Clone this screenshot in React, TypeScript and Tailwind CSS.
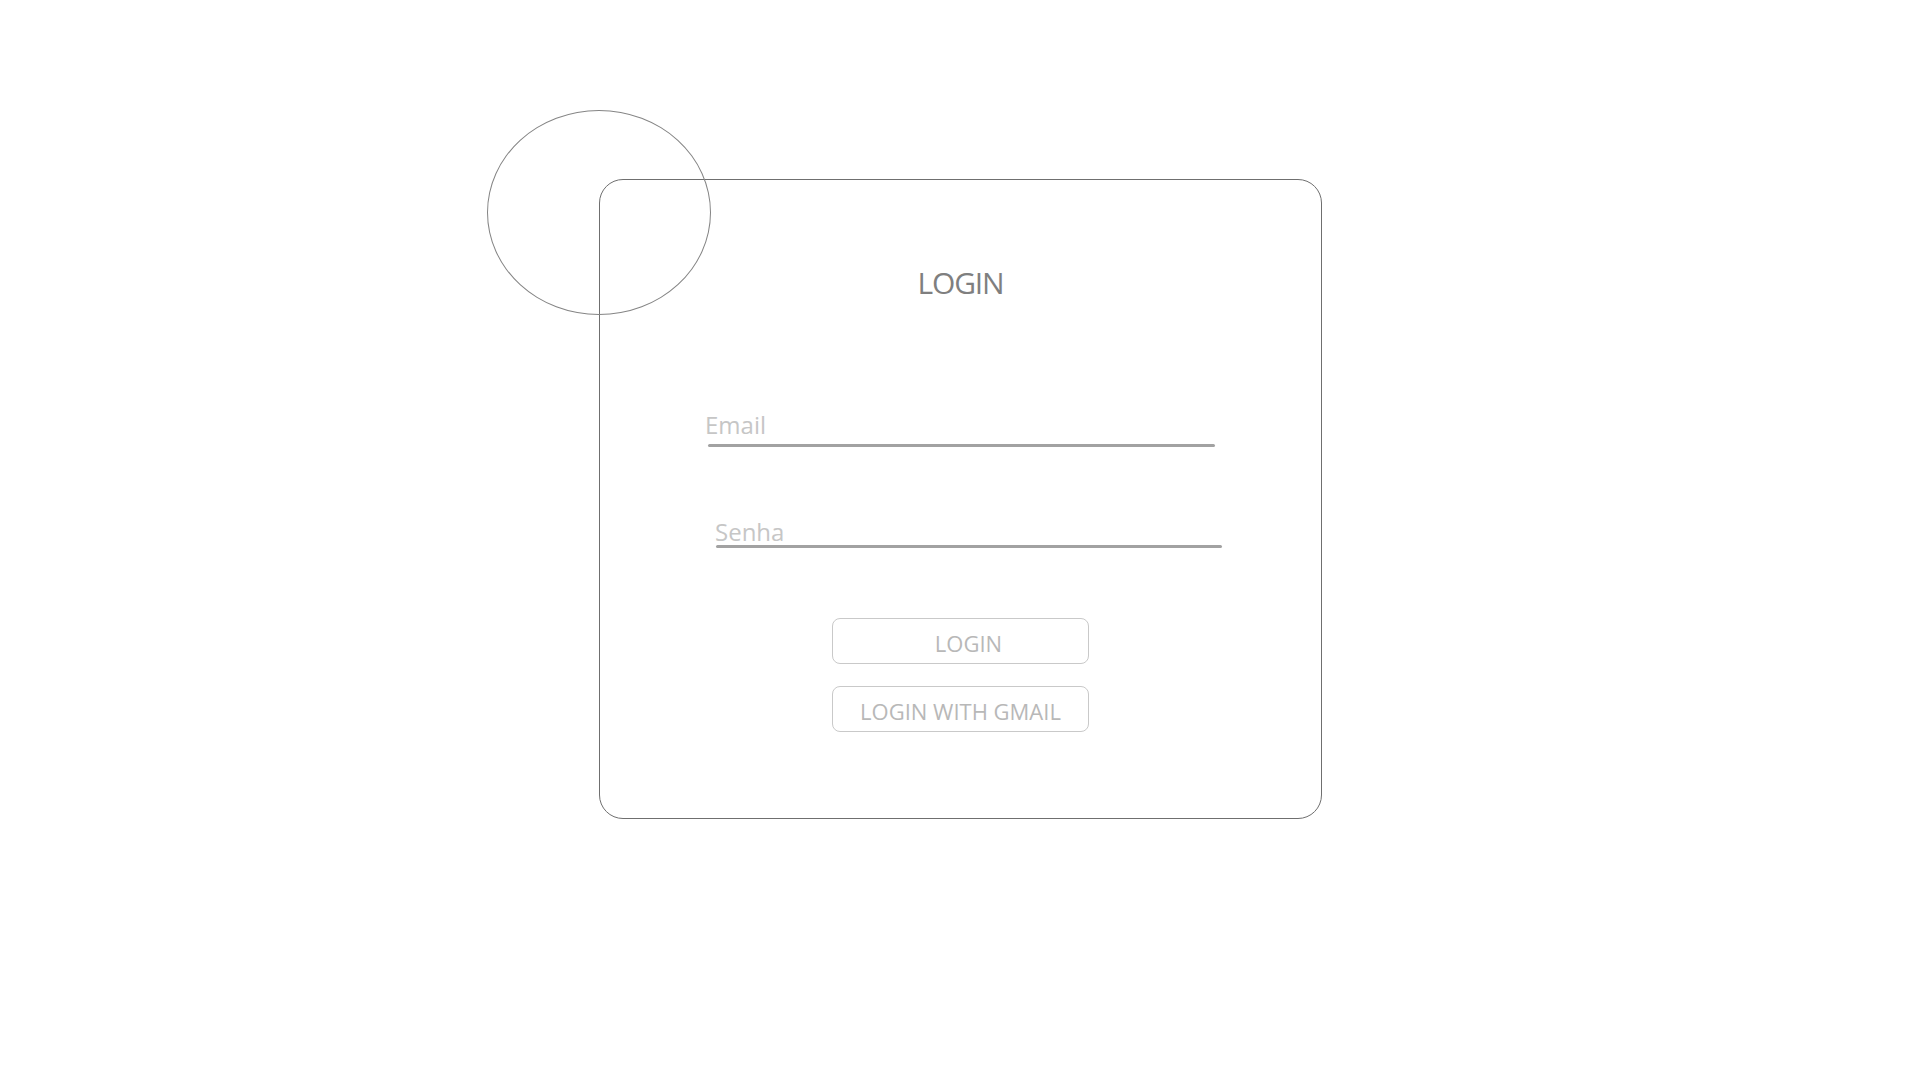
import React from "react";

export default function App() {
  return (
    <div
      className="relative w-[1920px] h-[1080px] bg-white overflow-hidden"
      style={{ fontFamily: '"Open Sans", "Noto Sans", sans-serif' }}
    >
      <div className="pt-[179px] pl-[599px]">
        <div className="w-[723px] h-[640px] border border-[#6f6f6f] rounded-[24px] flex flex-col">
          <div className="mt-[88px] self-center text-[30px] leading-[30px] tracking-[-1.2px] text-[#7f7f7f]">
            LOGIN
          </div>

          <div className="mt-[115px] ml-[105px] w-[512px] flex flex-col">
            <div className="text-[24px] leading-[24px] text-[#c6c6c6]">Email</div>
            <div className="mt-[7px] ml-[3px] w-[507px] h-[3px] rounded-full bg-[#a2a2a2]" />
          </div>

          <div className="mt-[73px] ml-[115px] w-[512px] flex flex-col">
            <div className="text-[24px] leading-[24px] text-[#c6c6c6]">Senha</div>
            <div className="mt-[1px] ml-[1px] w-[506px] h-[3px] rounded-full bg-[#a2a2a2]" />
          </div>

          <div className="mt-[70px] self-center flex flex-col gap-[22px]">
            <button className="w-[257px] h-[46px] border border-[#c9c9c9] rounded-[8px] flex items-center justify-center pl-4 pt-1 text-[22px] text-[#b8b8b8] bg-white">
              LOGIN
            </button>
            <button className="w-[257px] h-[46px] border border-[#c9c9c9] rounded-[8px] flex items-center justify-center pt-1 text-[22px] text-[#b8b8b8] bg-white">
              LOGIN WITH GMAIL
            </button>
          </div>
        </div>
      </div>

      <div className="absolute left-[487px] top-[110px] w-[224px] h-[205px] rounded-[50%] border border-[#858585]" />
    </div>
  );
}
